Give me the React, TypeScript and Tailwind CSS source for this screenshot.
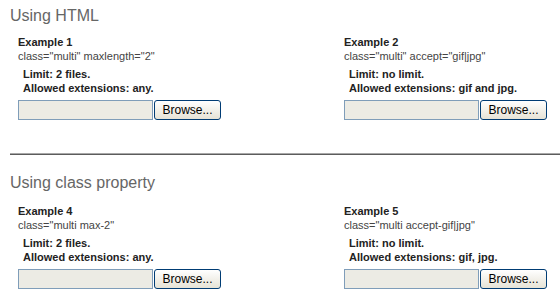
const sections = [
  {
    title: 'Using HTML',
    examples: [
      { name: 'Example 1', code: 'class="multi" maxlength="2"', limit: 'Limit: 2 files.', ext: 'Allowed extensions: any.' },
      { name: 'Example 2', code: 'class="multi" accept="gif|jpg"', limit: 'Limit: no limit.', ext: 'Allowed extensions: gif and jpg.' },
    ],
  },
  {
    title: 'Using class property',
    examples: [
      { name: 'Example 4', code: 'class="multi max-2"', limit: 'Limit: 2 files.', ext: 'Allowed extensions: any.' },
      { name: 'Example 5', code: 'class="multi accept-gif|jpg"', limit: 'Limit: no limit.', ext: 'Allowed extensions: gif, jpg.' },
    ],
  },
];

type Example = { name: string; code: string; limit: string; ext: string };

function FileInput() {
  return (
    <div className="flex h-[20px]">
      <div className="w-[135px] h-[20px] border border-[#7f9db9] bg-[#ecebe4]" />
      <button className="w-[67px] h-[20px] ml-[1px] rounded-[3px] border border-[#003c74] bg-gradient-to-b from-white to-[#e6e3d6] text-[12px] leading-[18px] text-black font-['Liberation_Sans',Arial,sans-serif]">
        Browse...
      </button>
    </div>
  );
}

function ExampleBlock({ ex }: { ex: Example }) {
  return (
    <div className="text-[11px] leading-[14px]">
      <div className="font-bold text-[#222]">{ex.name}</div>
      <div className="text-[#444]">{ex.code}</div>
      <div className="mt-[4px] pl-[5px] font-bold text-[#222]">
        <div>{ex.limit}</div>
        <div>{ex.ext}</div>
      </div>
      <div className="mt-[5px]">
        <FileInput />
      </div>
    </div>
  );
}

export default function App() {
  return (
    <div className="w-[560px] h-[300px] overflow-hidden bg-white pl-[10px] pt-[7px] font-['Liberation_Sans',Arial,sans-serif]">
      <h2 className="text-[16px] leading-[18px] text-[#666]">{sections[0].title}</h2>
      <div className="grid grid-cols-[326px_1fr] pl-[8px] mt-[10px]">
        {sections[0].examples.map((ex) => (
          <ExampleBlock key={ex.name} ex={ex} />
        ))}
      </div>
      <div className="mt-[33px] h-[2px] border-t border-[#a8a8a8] bg-[#5c5c5c]" />
      <h2 className="mt-[19px] text-[16px] leading-[18px] text-[#666]">{sections[1].title}</h2>
      <div className="grid grid-cols-[326px_1fr] pl-[8px] mt-[12px]">
        {sections[1].examples.map((ex) => (
          <ExampleBlock key={ex.name} ex={ex} />
        ))}
      </div>
    </div>
  );
}
